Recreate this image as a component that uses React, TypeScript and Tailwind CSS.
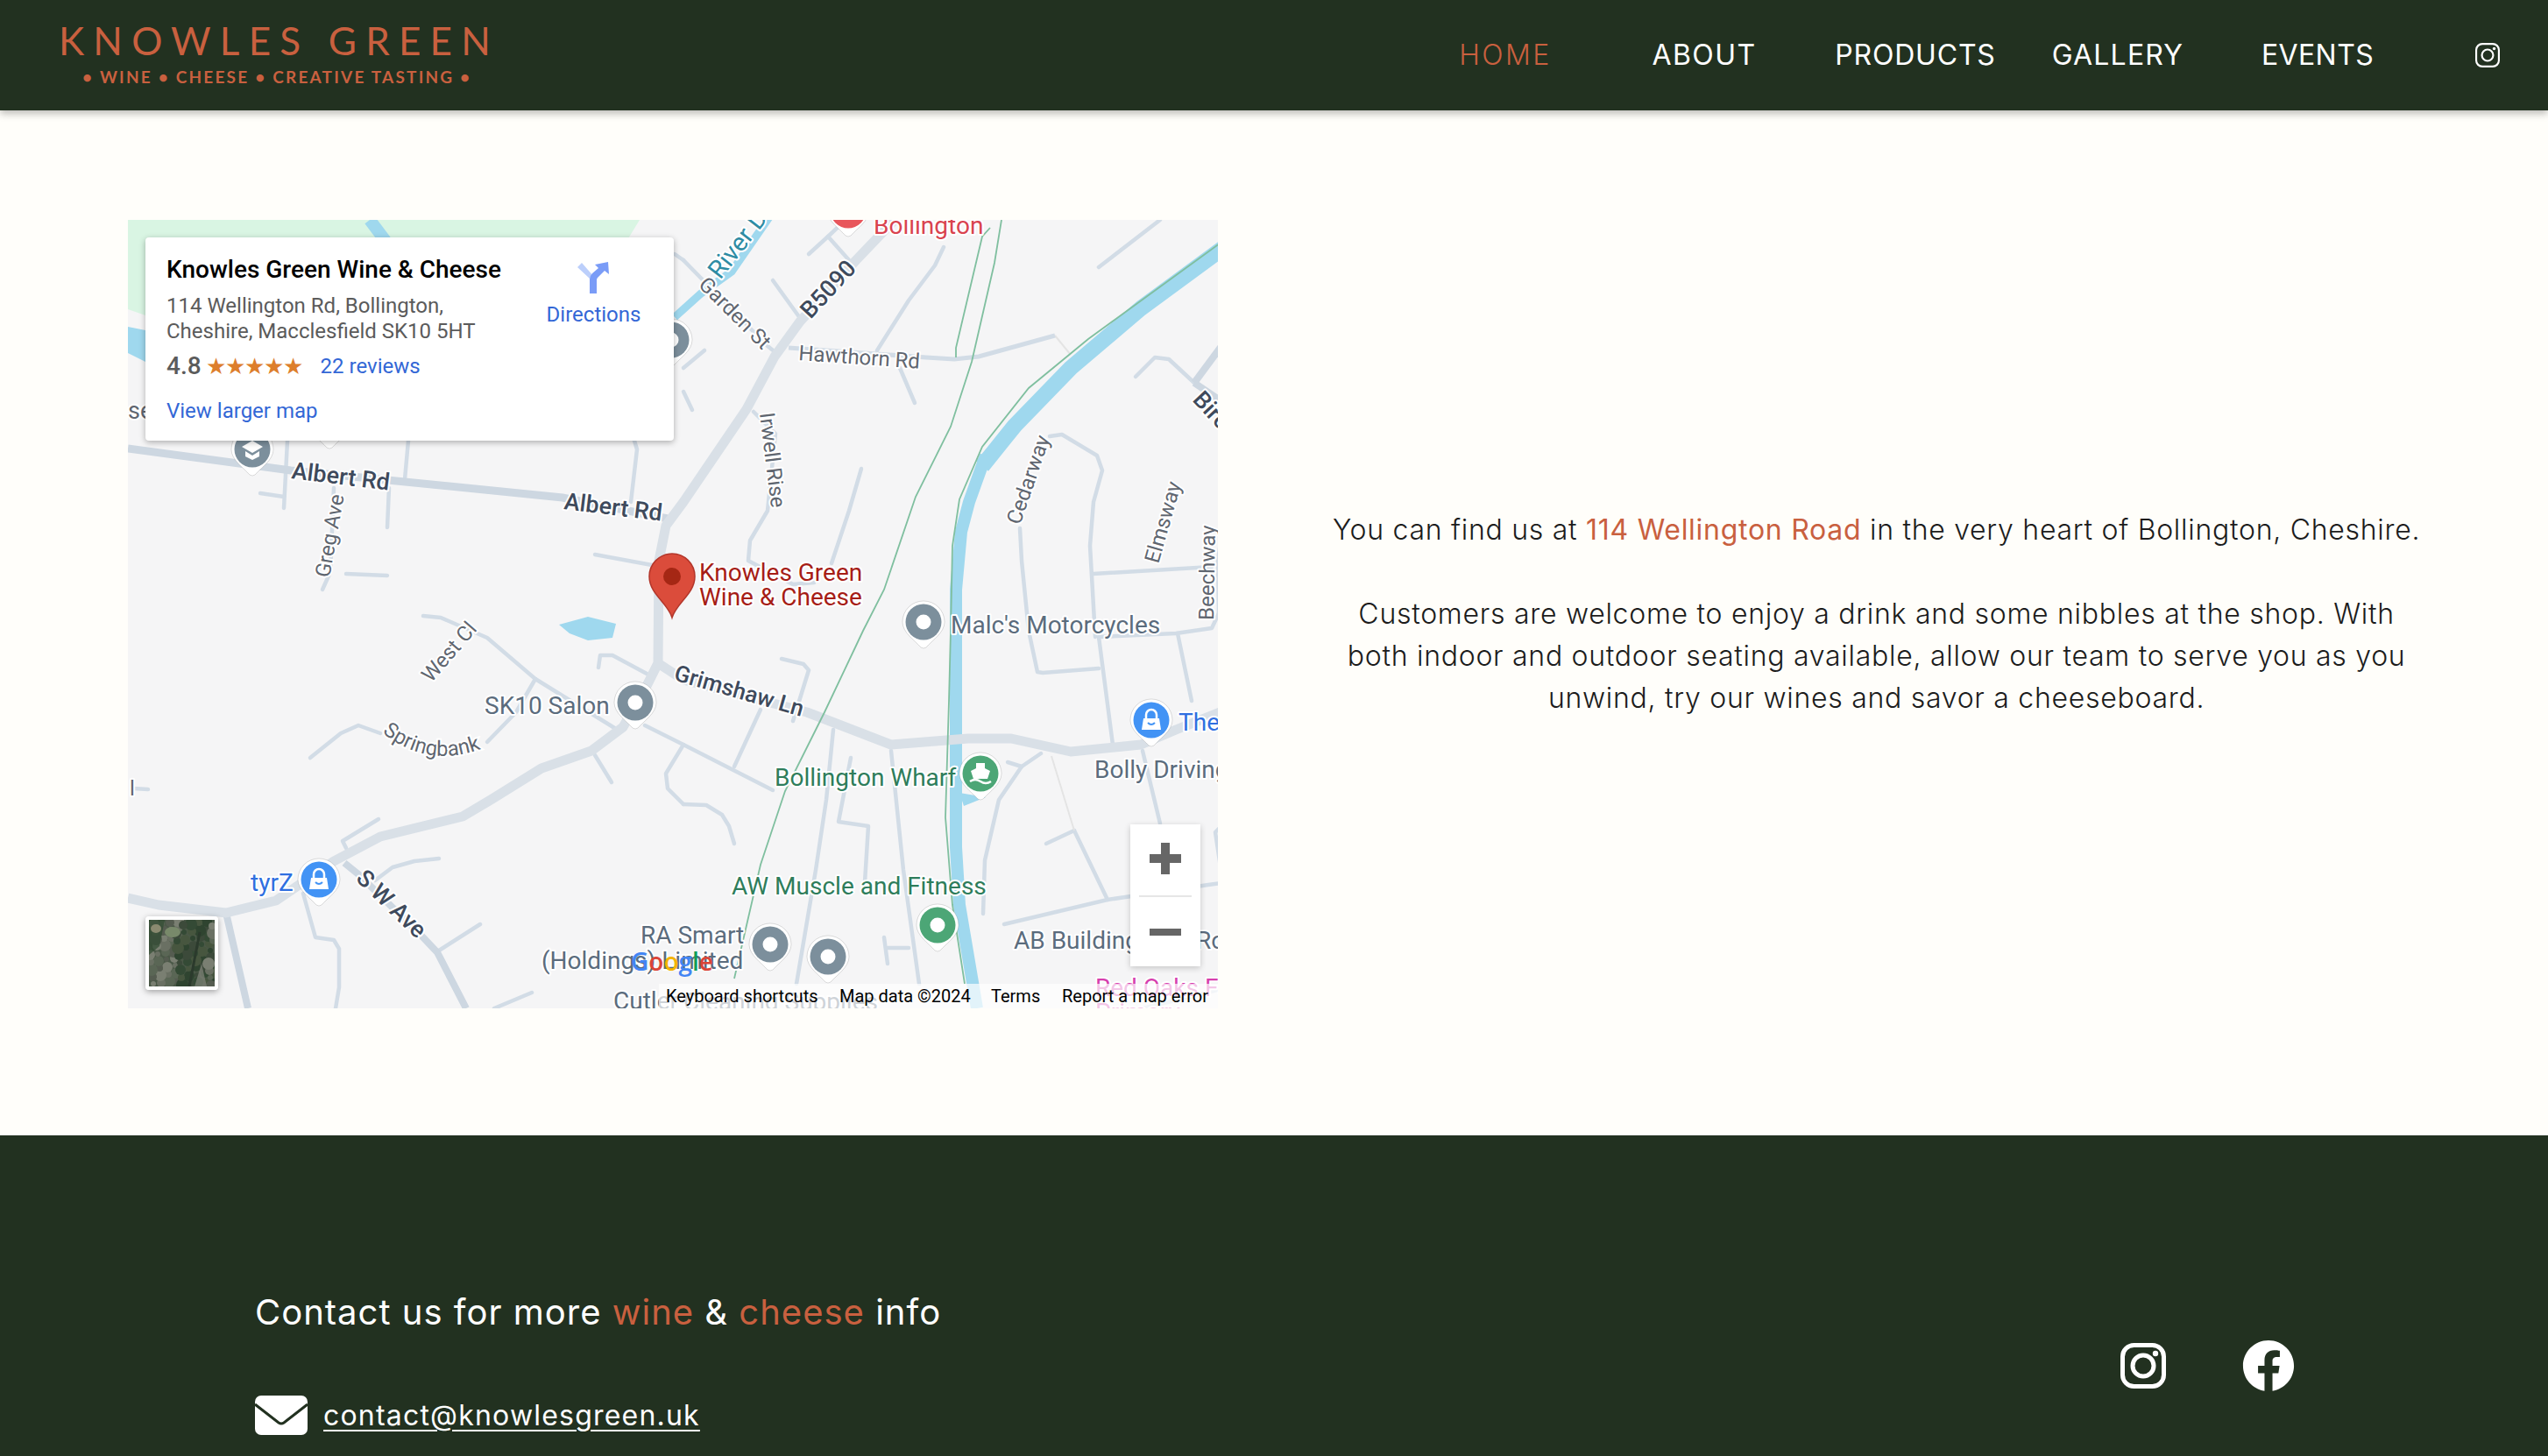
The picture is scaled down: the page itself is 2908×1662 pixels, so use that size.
import React from "react";
import { FaFacebook } from "react-icons/fa";

const minor: string[] = [
  "882,320 913,363","923,290 945,270 969,297","945,270 965,251","1077,282 1067,303 1037,343 1001,400","1027,420 1044,460",
  "983,535 969,583 949,643","860,470 885,495 876,583 856,617 854,640 905,667 929,665","780,297 876,395 886,403",
  "1254,305 1324,251","804,400 780,420","780,447 790,468","1296,430 1318,408 1334,410 1363,437",
  "1198,498 1212,496 1252,520 1258,537 1248,573 1244,623 1250,727","1164,603 1166,640 1174,720 1184,767 1190,768 1254,763",
  "1248,655 1383,647","1254,727 1270,850","1254,727 1342,723 1383,717 1391,700","1344,723 1360,800","1397,590 1390,640 1391,700",
  "892,752 917,758 923,765 905,823","868,810 838,875","780,850 882,902","780,918 806,919 824,930 832,943 838,963",
  "951,833 943,913 931,993 909,1123","971,865 957,938 991,943 987,1007","1017,857 1031,993 1049,1123",
  "1188,860 1166,875 1140,913 1124,982 1122,1043","1150,870 1166,875","1226,948 1194,963","1226,948 1264,1027",
  "1146,1055 1264,1027 1298,1022 1379,1010 1400,1007","1304,857 1324,940","1400,937 1387,950 1395,1003",
  "1009,1070 1013,1100","1013,1082 1037,1082","483,703 503,705 556,728 611,775 703,832",
  "611,775 589,813 556,847","434,837 409,828 389,837 354,865","683,762 685,748 699,748 740,770","679,862 698,893",
  "736,828 780,850 760,883 762,900 780,918","432,935 391,960 395,968","501,980 473,983 448,990 428,1005",
  "501,1085 548,1055","564,1151 607,1133","346,1020 360,1070 381,1073 387,1083 387,1127 383,1151","152,900 169,901",
  "328,503 324,580","297,563 324,567","444,557 442,602","466,503 462,547","395,655 442,657","368,673 377,653 381,557",
  "679,633 744,645","724,503 727,513 720,573","770,290 780,297","1304,1151 1390,1130",
];

const labels: { x: number; y: number; t: string; c: string; s?: number; w?: number; r?: number }[] = [
  { x: 997, y: 267, t: "Bollington", c: "#d9434f", s: 28 },
  { x: 822, y: 320, t: "River Dean", c: "#2e8ca4", s: 29, r: -52 },
  { x: 796, y: 326, t: "Garden St", c: "#5f6670", s: 24, r: 45 },
  { x: 925, y: 365, t: "B5090", c: "#3e4a5c", s: 27, w: 500, r: -47 },
  { x: 911, y: 411, t: "Hawthorn Rd", c: "#5f6670", s: 24, r: 4 },
  { x: 867, y: 472, t: "Irwell Rise", c: "#5f6670", s: 24, r: 83 },
  { x: 1164, y: 600, t: "Cedarway", c: "#5f6670", s: 24, r: -71 },
  { x: 1322, y: 644, t: "Elmsway", c: "#5f6670", s: 24, r: -74 },
  { x: 1385, y: 708, t: "Beechway", c: "#5f6670", s: 24, r: -89 },
  { x: 1360, y: 457, t: "Birch Rd", c: "#3e4a5c", s: 27, w: 500, r: 47 },
  { x: 332, y: 546, t: "Albert Rd", c: "#3e4a5c", s: 27, w: 500, r: 7 },
  { x: 643, y: 581, t: "Albert Rd", c: "#3e4a5c", s: 27, w: 500, r: 7 },
  { x: 376, y: 660, t: "Greg Ave", c: "#5f6670", s: 24, r: -80 },
  { x: 146, y: 478, t: "se", c: "#5f6670", s: 27 },
  { x: 492, y: 780, t: "West Cl", c: "#5f6670", s: 24, r: -49 },
  { x: 553, y: 815, t: "SK10 Salon", c: "#5b6c7d", s: 28 },
  { x: 286, y: 1017, t: "tyrZ", c: "#2f6fe0", s: 28 },
  { x: 405, y: 1004, t: "S W Ave", c: "#3e4a5c", s: 27, w: 500, r: 44 },
  { x: 798, y: 663, t: "Knowles Green", c: "#a61d16", s: 28 },
  { x: 798, y: 691, t: "Wine & Cheese", c: "#a61d16", s: 28 },
  { x: 1085, y: 723, t: "Malc's Motorcycles", c: "#5b6c7d", s: 28 },
  { x: 768, y: 776, t: "Grimshaw Ln", c: "#3e4a5c", s: 26, w: 500, r: 16 },
  { x: 884, y: 897, t: "Bollington Wharf", c: "#2e7d5b", s: 28 },
  { x: 835, y: 1021, t: "AW Muscle and Fitness", c: "#2e7d5b", s: 28 },
  { x: 1249, y: 888, t: "Bolly Driving Range", c: "#5b6c7d", s: 28 },
  { x: 1345, y: 834, t: "The", c: "#2f6fe0", s: 28 },
  { x: 1157, y: 1083, t: "AB Building", c: "#5b6c7d", s: 28 },
  { x: 1365, y: 1083, t: "Ro", c: "#5b6c7d", s: 28 },
  { x: 731, y: 1077, t: "RA Smart", c: "#5b6c7d", s: 28 },
  { x: 618, y: 1106, t: "(Holdings) Limited", c: "#5b6c7d", s: 28 },
  { x: 700, y: 1152, t: "Cutler", c: "#5b6c7d", s: 28 },
  { x: 780, y: 1153, t: "Cleaning Supplies", c: "#5b6c7d", s: 28 },
  { x: 1250, y: 1137, t: "Red Oaks Farm", c: "#d63fae", s: 28 },
  { x: 1250, y: 1165, t: "Primary", c: "#d63fae", s: 28 },
  { x: 148, y: 908, t: "l", c: "#5f6670", s: 24 },
];

function Pin({ x, y, c, hole = true, children }: { x: number; y: number; c: string; hole?: boolean; children?: React.ReactNode }) {
  return (
    <g transform={`translate(${x} ${y})`}>
      <path d="M-24 0A24 24 0 1 1 24 0C24 12 10 21 3 29Q0 31 -3 29C-10 21 -24 12 -24 0Z" fill="#ffffff" stroke="#00000022" strokeWidth="1" />
      <circle r="20.5" fill={c} />
      {hole && <circle r="8.5" fill="#ffffff" />}
      {children}
    </g>
  );
}

const Bag = () => (
  <g fill="#ffffff">
    <path d="M-9 -2H9L11 11H-11Z" />
    <path d="M-6 -2V-6A6 6 0 0 1 6 -6V-2" fill="none" stroke="#ffffff" strokeWidth="2.5" />
    <path d="M-4 3Q0 7 4 3" fill="none" stroke="#4293f5" strokeWidth="2" />
  </g>
);

function MapDrawing() {
  return (
    <svg viewBox="146 251 1244 900" className="absolute inset-0 w-full h-full" style={{ fontFamily: "Roboto, sans-serif" }}>
      <rect x="146" y="251" width="1244" height="900" fill="#f5f5f6" />
      <polygon points="146,251 730,251 700,300 166,360 146,353" fill="#d9f5e3" />
      <polygon points="146,373 166,377 166,413 146,403" fill="#9fd8ee" />
      <polyline points="422,251 440,275" fill="none" stroke="#9fd8ee" strokeWidth="14" />
      <polyline points="770,362 800,335 835,310 880,245" fill="none" stroke="#9fd8ee" strokeWidth="9" />
      <polygon points="638,713 671,704 703,712 699,728 671,731 650,723" fill="#9fd8ee" />
      <polyline points="1400,280 1302,352 1222,420 1158,486 1121,532" fill="none" stroke="#9fd8ee" strokeWidth="18" strokeLinejoin="round" />
      <polyline points="1125,520 1106,573 1097,607 1091,673 1091,733 1091,833 1091,907 1091,967 1095,1033 1115,1151" fill="none" stroke="#9fd8ee" strokeWidth="14" strokeLinejoin="round" />
      <polygon points="1095,905 1125,910 1100,920" fill="#9fd8ee" />
      {minor.map((p, i) => (
        <polyline key={i} points={p} fill="none" stroke="#d2dce6" strokeWidth="4.5" strokeLinecap="round" strokeLinejoin="round" />
      ))}
      <polyline points="1204,383 1222,405" fill="none" stroke="#e4e4e4" strokeWidth="2" />
      <polyline points="1200,863 1226,948" fill="none" stroke="#e4e4e4" strokeWidth="2" />
      <polyline points="900,397 1057,408 1089,410 1117,407 1204,383" fill="none" stroke="#d2dce6" strokeWidth="5" />
      <polyline points="146,512 332,537 642,568 762,592" fill="none" stroke="#cdd7e1" strokeWidth="9" />
      <polyline points="393,985 409,998 481,1068 499,1087 532,1151" fill="none" stroke="#cdd7e1" strokeWidth="8" />
      <polyline points="258,1042 283,1151" fill="none" stroke="#cdd7e1" strokeWidth="8" />
      <polyline points="1363,437 1400,387" fill="none" stroke="#cdd7e1" strokeWidth="8" />
      <polyline points="1363,437 1400,462" fill="none" stroke="#cdd7e1" strokeWidth="8" />
      <g fill="none" stroke="#d9e0e7" strokeWidth="11" strokeLinejoin="round">
        <polyline points="1021,251 977,297 913,367 884,407 852,467 780,573 760,600 752,640 751,757 738,783 711,830 675,857 618,877 560,913 528,932 434,955 381,983 315,1028 258,1042 181,1033 146,1025" />
        <polyline points="751,757 780,776 921,813 1017,850 1105,843 1154,843 1222,858 1302,850 1342,833 1400,810" />
      </g>
      <g fill="none" stroke="#7fbf9f" strokeWidth="1.8">
        <polyline points="1400,272 1242,387 1174,443 1121,510 1095,570 1087,623 1085,720 1083,800 1079,933 1087,1033 1101,1123" />
        <polyline points="1143,251 1135,300 1109,413 1085,487 1045,567 1009,673 985,720 977,737 941,813 896,903 868,987 838,1117" />
        <polyline points="1130,260 1121,270 1091,397 1091,408" />
      </g>
      <g>
        {labels.map((l, i) => (
          <text
            key={i}
            x={l.x}
            y={l.y}
            fill={l.c}
            fontSize={l.s ?? 26}
            fontWeight={l.w ?? 400}
            stroke="#ffffff"
            strokeWidth="4"
            strokeLinejoin="round"
            style={{ paintOrder: "stroke" }}
            transform={l.r ? `rotate(${l.r} ${l.x} ${l.y})` : undefined}
          >
            {l.t}
          </text>
        ))}
        <path id="springbank-path" d="M436 836Q490 880 556 852" fill="none" />
        <text fontSize="24" fill="#5f6670" stroke="#ffffff" strokeWidth="4" style={{ paintOrder: "stroke" }}>
          <textPath href="#springbank-path">Springbank</textPath>
        </text>
      </g>
      <Pin x={725} y={802} c="#7c8f9c" />
      <Pin x={1054} y={710} c="#7c8f9c" />
      <Pin x={879} y={1078} c="#7c8f9c" />
      <Pin x={945} y={1092} c="#7c8f9c" />
      <Pin x={766} y={388} c="#7c8f9c" />
      <Pin x={376} y={482} c="#7c8f9c" />
      <Pin x={968} y={240} c="#e8565c" hole={false} />
      <Pin x={288} y={513} c="#7c8f9c" hole={false}>
        <path d="M-12 -3L0 -10L12 -3L0 4Z" fill="#ffffff" />
        <path d="M-8 2V8L0 12L8 8V2L0 7Z" fill="#ffffff" />
      </Pin>
      <Pin x={364} y={1004} c="#4293f5" hole={false}><Bag /></Pin>
      <Pin x={1314} y={822} c="#4293f5" hole={false}><Bag /></Pin>
      <Pin x={1119} y={883} c="#4ca676" hole={false}>
        <path d="M-5 -12H5V-6L11 -3L8 6H-8L-11 -3L-5 -6Z" fill="#ffffff" />
        <path d="M-12 9Q-6 5 0 9T12 9" fill="none" stroke="#ffffff" strokeWidth="2.5" />
      </Pin>
      <Pin x={1070} y={1056} c="#4ca676" />
      <g>
        <path d="M767 705C762 688 741 678 741 658A26 26 0 0 1 793 658C793 678 772 688 767 705Z" fill="#db4c3b" stroke="#b3362a" strokeWidth="1.5" />
        <circle cx="767" cy="658" r="10" fill="#a52714" />
      </g>
      <rect x="752" y="1123" width="638" height="28" fill="#ffffff" fillOpacity="0.7" />
      <text x="720" y="1108" fontSize="28" fontWeight="600" style={{ fontFamily: "'Open Sans', sans-serif" }}>
        <tspan fill="#4285f4">G</tspan>
        <tspan fill="#db4437">o</tspan>
        <tspan fill="#f4b400">o</tspan>
        <tspan fill="#4285f4">g</tspan>
        <tspan fill="#0f9d58">l</tspan>
        <tspan fill="#db4437">e</tspan>
      </text>
      <g fontSize="20" fill="#000000">
        <text x="760" y="1144">Keyboard shortcuts</text>
        <text x="958" y="1144">Map data ©2024</text>
        <text x="1131" y="1144">Terms</text>
        <text x="1212" y="1144">Report a map error</text>
      </g>
    </svg>
  );
}

function Satellite() {
  const blotches: [number, number, number, string][] = [];
  const colours = ["#3c4a3a", "#5a6655", "#2f4430", "#6a7063", "#47563f", "#7a7f72", "#344a35", "#555c50"];
  for (let i = 0; i < 90; i++) {
    blotches.push([(i * 37) % 75, (i * 23 + (i % 7) * 11) % 76, 3 + (i % 5), colours[(i * 5) % 8]]);
  }
  return (
    <svg viewBox="0 0 75 76" className="block w-full h-full">
      <rect width="75" height="76" fill="#4a5847" />
      {blotches.map(([x, y, r, c], i) => (
        <circle key={i} cx={x} cy={y} r={r} fill={c} />
      ))}
      <path d="M0 0H18L12 30L0 40Z" fill="#2f4a30" opacity="0.7" />
      <path d="M58 14L46 76" stroke="#2b3a2c" strokeWidth="3" fill="none" />
      <ellipse cx="27" cy="14" rx="9" ry="6" fill="#78896a" />
      <ellipse cx="8" cy="10" rx="6" ry="5" fill="#8a8a70" />
      <path d="M60 50L52 76H66Z" fill="#82857a" opacity="0.7" />
    </svg>
  );
}

function DirectionsIcon() {
  return (
    <svg viewBox="0 0 37 36" className="w-[37px] h-[36px]">
      <path d="M0 6L5 1L19 17V23H14V19Z" fill="#bccffb" />
      <path d="M14 36V20Q14 16 17 13L24 7L20 3L35 0L36 14L31 10L23 18Q22 19 22 21V36Z" fill="#7a9cf7" />
    </svg>
  );
}

function Instagram({ className, sw }: { className: string; sw: number }) {
  return (
    <svg viewBox="0 0 52 52" className={className} fill="none" stroke="#ffffff" strokeWidth={sw}>
      <rect x={sw / 2} y={sw / 2} width={52 - sw} height={52 - sw} rx="13" />
      <circle cx="26" cy="26" r="12" />
      <circle cx="40" cy="12" r="3.2" fill="#ffffff" stroke="none" />
    </svg>
  );
}

const navItems = [
  { t: "HOME", w: "w-[226px]", c: "text-[#c9603f] font-light tracking-[2.4px]" },
  { t: "ABOUT", w: "w-[228px]", c: "text-white tracking-[1.4px]" },
  { t: "PRODUCTS", w: "w-[254px]", c: "text-white tracking-[0.8px]" },
  { t: "GALLERY", w: "w-[208px]", c: "text-white tracking-[1.2px]" },
  { t: "EVENTS", w: "w-[248px]", c: "text-white tracking-[0.4px]" },
];

export default function App() {
  return (
    <div className="w-[2908px] h-[1662px] overflow-hidden bg-[#fffefa] font-['Inter',sans-serif]">
      <header className="relative z-10 h-[126px] bg-[#223120] flex items-center shadow-[0_4px_8px_rgba(0,0,0,0.25)]">
        <div className="pl-[67px] flex flex-col w-[620px] -mt-[3px]">
          <div className="font-['Lato',sans-serif] text-[44px] leading-[44px] tracking-[10.2px] text-[#c9603f] whitespace-nowrap">KNOWLES GREEN</div>
          <div className="ml-[27px] mt-[9px] font-['Lato',sans-serif] font-bold text-[19px] leading-[22px] tracking-[2.2px] text-[#c9603f] whitespace-nowrap">• WINE • CHEESE • CREATIVE TASTING •</div>
        </div>
        <nav className="ml-auto flex items-center text-[32px]">
          {navItems.map((n) => (
            <a key={n.t} className={`${n.w} ${n.c} text-center`}>{n.t}</a>
          ))}
          <a className="w-[139px] flex justify-center"><Instagram className="w-[28px] h-[28px]" sw={4} /></a>
        </nav>
      </header>

      <main className="grid grid-cols-[1244px_1fr] gap-[128px] items-center pl-[146px] pr-[146px] pt-[125px] pb-[145px]">
        <div className="relative h-[900px] overflow-hidden font-['Roboto',sans-serif]">
          <MapDrawing />
          <div className="absolute left-[20px] top-[20px] w-[603px] h-[232px] bg-white rounded-[4px] shadow-[0_2px_7px_rgba(0,0,0,0.3)] pl-[24px] pt-[20px] flex">
            <div className="w-[418px]">
              <div className="text-[28px] leading-[34px] font-medium text-black whitespace-nowrap">Knowles Green Wine &amp; Cheese</div>
              <div className="mt-[10px] text-[24px] leading-[29px] text-[#5b5b5b] whitespace-nowrap">114 Wellington Rd, Bollington,<br />Cheshire, Macclesfield SK10 5HT</div>
              <div className="mt-[8px] flex items-center h-[34px]">
                <span className="text-[28px] font-medium text-[#5b5b5b]">4.8</span>
                <span className="ml-[5px] text-[26px] leading-[24px] tracking-[-1px] text-[#dd7e2c]">★★★★★</span>
                <span className="ml-[21px] text-[24px] text-[#3367d6]">22 reviews</span>
              </div>
              <div className="mt-[19px] text-[24px] leading-[30px] text-[#3367d6] whitespace-nowrap">View larger map</div>
            </div>
            <div className="ml-[16px] w-[107px] flex flex-col items-center mt-[8px]">
              <DirectionsIcon />
              <div className="mt-[10px] text-[24px] leading-[28px] text-[#3367d6]">Directions</div>
            </div>
          </div>
          <div className="absolute right-[20px] top-[690px] w-[80px] h-[162px] bg-white shadow-[0_2px_7px_rgba(0,0,0,0.2)] flex flex-col items-center">
            <div className="relative w-[80px] h-[81px]">
              <div className="absolute left-[22px] top-[34px] w-[36px] h-[10px] bg-[#666666]" />
              <div className="absolute left-[35px] top-[21px] w-[10px] h-[36px] bg-[#666666]" />
            </div>
            <div className="w-[60px] h-[2px] bg-[#e6e6e6]" />
            <div className="relative w-[80px] flex-1">
              <div className="absolute left-[22px] top-[36px] w-[36px] h-[8px] bg-[#666666]" />
            </div>
          </div>
          <div className="absolute left-[20px] bottom-[21px] w-[83px] h-[84px] border-[4px] border-white rounded-[4px] overflow-hidden shadow-[0_2px_7px_rgba(0,0,0,0.35)]">
            <Satellite />
          </div>
        </div>

        <div className="pl-[3px] text-center text-[32px] leading-[48px] font-light text-[#1c1c1c] tracking-[0.72px]">
          <p className="whitespace-nowrap">You can find us at <span className="text-[#c9603f] font-normal">114 Wellington Road</span> in the very heart of Bollington, Cheshire.</p>
          <p className="mt-[48px] whitespace-nowrap">Customers are welcome to enjoy a drink and some nibbles at the shop. With<br />both indoor and outdoor seating available, allow our team to serve you as you<br />unwind, try our wines and savor a cheeseboard.</p>
        </div>
      </main>

      <footer className="h-[366px] bg-[#223120] flex justify-between pl-[291px] pr-[289px]">
        <div className="pt-[172px]">
          <h2 className="text-[40px] leading-[60px] font-normal tracking-[1px] text-white whitespace-nowrap">Contact us for more <span className="text-[#c9603f]">wine</span> &amp; <span className="text-[#c9603f]">cheese</span> info</h2>
          <div className="mt-[65px] flex items-center gap-[18px]">
            <svg viewBox="0 0 60 45" className="w-[60px] h-[45px]">
              <rect width="60" height="45" rx="7" fill="#ffffff" />
              <path d="M0 10L27 31Q30 33 33 31L60 10" fill="none" stroke="#223120" strokeWidth="3" />
            </svg>
            <a className="text-[32px] leading-[44px] tracking-[1.2px] text-white underline underline-offset-[5px] decoration-[2px] whitespace-nowrap">contact@knowlesgreen.uk</a>
          </div>
        </div>
        <div className="pt-[233px] flex items-start gap-[87px]">
          <Instagram className="w-[52px] h-[52px] mt-[4px]" sw={5} />
          <FaFacebook className="w-[60px] h-[60px] text-white" />
        </div>
      </footer>
    </div>
  );
}
